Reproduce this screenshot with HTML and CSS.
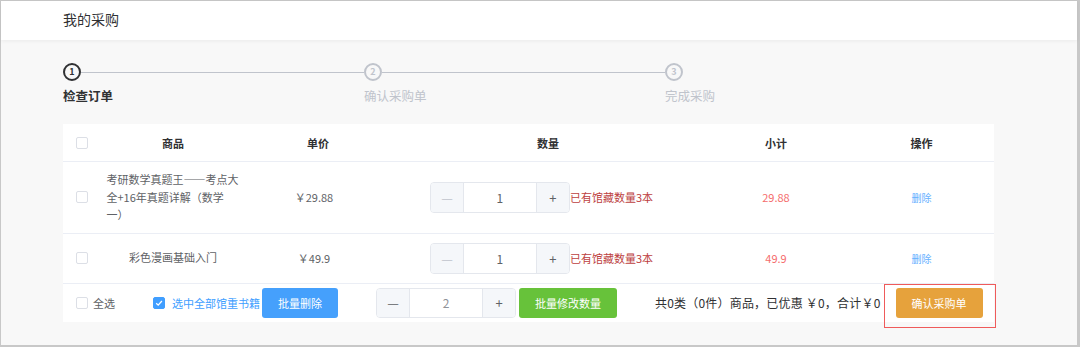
FILE: index.html
```html
<!DOCTYPE html>
<html lang="zh-CN">
<head>
    <meta charset="UTF-8">
    <meta name="viewport" content="width=device-width, initial-scale=1.0">
    <title>我的采购</title>
    <link rel="stylesheet" href="styles.css">
</head>
<body>
    <div class="frame">
        <div class="topbar">我的采购</div>

        <div class="main">
            <!-- 步骤条 -->
            <div class="steps">
                <div class="step active">
                    <div class="step-head"><span class="step-icon">1</span><span class="step-line"></span></div>
                    <div class="step-title">检查订单</div>
                </div>
                <div class="step">
                    <div class="step-head"><span class="step-icon">2</span><span class="step-line"></span></div>
                    <div class="step-title">确认采购单</div>
                </div>
                <div class="step last">
                    <div class="step-head"><span class="step-icon">3</span></div>
                    <div class="step-title">完成采购</div>
                </div>
            </div>

            <!-- 采购清单 -->
            <div class="cart">
                <div class="row head">
                    <div class="cell check"><span class="checkbox"></span></div>
                    <div class="cell">商品</div>
                    <div class="cell">单价</div>
                    <div class="cell">数量</div>
                    <div class="cell">小计</div>
                    <div class="cell">操作</div>
                </div>

                <div class="row">
                    <div class="cell check"><span class="checkbox"></span></div>
                    <div class="cell"><span class="book-name">考研数学真题王——考点大全+16年真题详解（数学一）</span></div>
                    <div class="cell price">￥29.88</div>
                    <div class="cell qty">
                        <div class="num-input">
                            <span class="num-btn disabled">—</span>
                            <span class="num-value">1</span>
                            <span class="num-btn">+</span>
                        </div>
                        <span class="stock-tip">已有馆藏数量3本</span>
                    </div>
                    <div class="cell subtotal">29.88</div>
                    <div class="cell"><a class="link-del">删除</a></div>
                </div>

                <div class="row">
                    <div class="cell check"><span class="checkbox"></span></div>
                    <div class="cell"><span class="book-name">彩色漫画基础入门</span></div>
                    <div class="cell price">￥49.9</div>
                    <div class="cell qty">
                        <div class="num-input">
                            <span class="num-btn disabled">—</span>
                            <span class="num-value">1</span>
                            <span class="num-btn">+</span>
                        </div>
                        <span class="stock-tip">已有馆藏数量3本</span>
                    </div>
                    <div class="cell subtotal">49.9</div>
                    <div class="cell"><a class="link-del">删除</a></div>
                </div>

                <div class="footer">
                    <span class="checkbox"></span>
                    <span class="select-all">全选</span>
                    <span class="checkbox checked">
                        <svg viewBox="0 0 12 12" width="12" height="12"><path d="M3.2 6.2 L5.2 8.1 L8.9 4" fill="none" stroke="#fff" stroke-width="1.3"/></svg>
                    </span>
                    <span class="select-dup">选中全部馆重书籍</span>
                    <button class="btn btn-blue">批量删除</button>
                    <div class="num-input batch">
                        <span class="num-btn">—</span>
                        <span class="num-value">2</span>
                        <span class="num-btn">+</span>
                    </div>
                    <button class="btn btn-green">批量修改数量</button>
                    <span class="total">共0类（0件）商品，已优惠 ￥0，合计￥0</span>
                    <button class="btn btn-orange">确认采购单</button>
                    <span class="mark"></span>
                </div>
            </div>
        </div>
    </div>
</body>
</html>
```

FILE: styles.css
```css
body {
    margin: 0;
    background-color: #fff;
    font-family: "Noto Sans CJK SC", "Noto Sans", sans-serif;
    color: #606266;
}
.frame {
    width: 1080px;
    height: 347px;
    box-sizing: border-box;
    border: 1px solid #c8c8c8;
    border-right-width: 3px;
    border-bottom-width: 2px;
    display: flex;
    flex-direction: column;
    background-color: #f8f8f8;
}
.topbar {
    height: 39px;
    line-height: 36px;
    padding-left: 62px;
    font-size: 14px;
    color: #303133;
    background-color: #fff;
    box-shadow: 0 1px 4px rgba(0, 0, 0, 0.06);
}
.main {
    flex: 1;
    padding-left: 62px;
}

/* 步骤条 */
.steps {
    display: flex;
    margin-top: 23px;
}
.step {
    flex: 0 0 301px;
}
.step.last {
    flex: 0 0 auto;
}
.step-head {
    display: flex;
    align-items: center;
}
.step-icon {
    width: 18px;
    height: 18px;
    box-sizing: border-box;
    border: 2px solid #c0c4cc;
    border-radius: 50%;
    color: #c0c4cc;
    font-size: 9px;
    font-weight: bold;
    line-height: 14px;
    text-align: center;
}
.step-line {
    flex: 1;
    height: 1px;
    background-color: #c0c4cc;
}
.step-title {
    margin-top: 5px;
    font-size: 12.5px;
    line-height: 20px;
    color: #c0c4cc;
}
.step.active .step-icon {
    border-color: #303133;
    color: #303133;
}
.step.active .step-title {
    color: #303133;
    font-weight: bold;
}

/* 采购清单 */
.cart {
    position: relative;
    width: 931px;
    margin-top: 18px;
    background-color: #fff;
    font-size: 11px;
}
.row {
    display: grid;
    grid-template-columns: 40px 140px 150px 310px 146px 145px;
    align-items: center;
    border-bottom: 1px solid #ebeef5;
    padding: 9px 0;
}
.row.head {
    height: 38px;
    padding: 0;
    box-sizing: border-box;
    font-weight: bold;
    color: #303133;
}
.cell {
    text-align: center;
}
.cell.check {
    text-align: left;
    padding-left: 13px;
    display: flex;
}
.checkbox {
    display: inline-block;
    width: 12px;
    height: 12px;
    box-sizing: border-box;
    border: 1px solid #dcdfe6;
    border-radius: 2px;
    background-color: #fff;
}
.checkbox.checked {
    border-color: #409eff;
    background-color: #409eff;
}
.checkbox.checked svg {
    display: block;
    margin: -1px;
}
.book-name {
    display: inline-block;
    max-width: 133px;
    text-align: left;
    line-height: 17.5px;
}
.price {
    padding-right: 8px;
}
.qty {
    display: flex;
    align-items: center;
    justify-content: center;
    padding-right: 13px;
}
.num-input {
    display: flex;
    width: 140px;
    height: 31px;
    box-sizing: border-box;
    border: 1px solid #e4e7ed;
    border-radius: 4px;
    overflow: hidden;
}
.num-btn {
    width: 32px;
    background-color: #f5f7fa;
    color: #606266;
    font-size: 13px;
    display: flex;
    align-items: center;
    justify-content: center;
}
.num-btn:first-child {
    border-right: 1px solid #e4e7ed;
}
.num-btn:last-child {
    border-left: 1px solid #e4e7ed;
}
.num-btn.disabled {
    color: #c0c4cc;
}
.num-value {
    flex: 1;
    display: flex;
    align-items: center;
    justify-content: center;
    font-size: 12px;
    color: #606266;
}
.stock-tip {
    color: #bd3f3f;
    font-size: 11px;
    white-space: nowrap;
}
.subtotal {
    color: #f56c6c;
}
.link-del {
    color: #66b1ff;
    font-size: 10px;
    cursor: pointer;
}

/* 底部操作栏 */
.footer {
    position: relative;
    display: flex;
    align-items: center;
    height: 38px;
    padding-left: 13px;
}
.select-all {
    margin-left: 5px;
    color: #606266;
}
.footer .checkbox.checked {
    margin-left: 38px;
}
.select-dup {
    margin-left: 7px;
    color: #409eff;
}
.btn {
    height: 30px;
    border: none;
    border-radius: 3px;
    color: #fff;
    font-family: inherit;
    font-size: 11px;
    cursor: pointer;
}
.btn-blue {
    width: 76px;
    margin-left: 2px;
    background-color: #45a0fc;
}
.num-input.batch {
    margin-left: 38px;
    height: 30px;
}
.num-input.batch .num-value {
    color: #909399;
}
.btn-green {
    width: 98px;
    margin-left: 3px;
    background-color: #67c23a;
}
.total {
    margin-left: 38px;
    font-size: 12px;
    letter-spacing: 0.2px;
    color: #303133;
    white-space: nowrap;
}
.btn-orange {
    width: 87px;
    margin-left: 15px;
    background-color: #e6a23c;
}
.mark {
    position: absolute;
    left: 821px;
    top: 0;
    width: 112px;
    height: 44px;
    box-sizing: border-box;
    border: 1px solid #ef5b5b;
}
```
